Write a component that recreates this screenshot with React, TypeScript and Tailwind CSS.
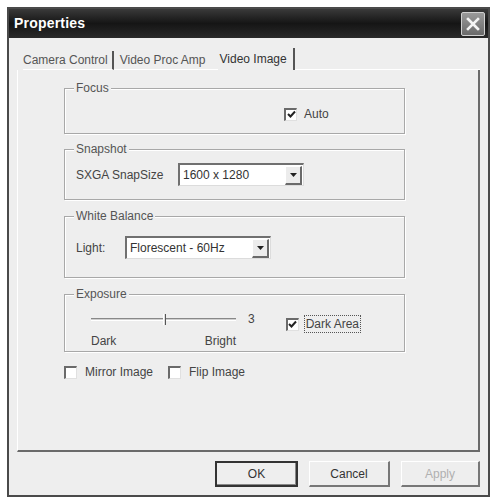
import React from "react";

const font = { fontFamily: '"Liberation Sans", Arial, sans-serif' };

function Check({ checked }: { checked?: boolean }) {
  return (
    <div className="w-[13px] h-[13px] bg-white border-t-2 border-l-2 border-b border-r border-t-[#6a6a6a] border-l-[#6a6a6a] border-b-[#e0e0e0] border-r-[#e0e0e0] flex items-center justify-center shrink-0">
      {checked && (
        <svg width="9" height="9" viewBox="0 0 9 9">
          <path d="M1 4 L3.5 6.5 L8 1.5" stroke="#222" strokeWidth="2" fill="none" />
        </svg>
      )}
    </div>
  );
}

function Combo({ value, w }: { value: string; w: string }) {
  return (
    <div className={`${w} h-[23px] bg-white border-t-2 border-l-2 border-b border-r border-t-[#707070] border-l-[#707070] border-b-[#dcdcdc] border-r-[#dcdcdc] flex items-center`}>
      <span className="flex-1 pl-[3px] text-[12px] text-[#333] leading-none">{value}</span>
      <div className="w-[17px] h-[19px] bg-[#ececec] border-t border-l border-b-2 border-r-2 border-t-white border-l-white border-b-[#6a6a6a] border-r-[#6a6a6a] flex items-center justify-center mr-[1px]">
        <svg width="7" height="4" viewBox="0 0 7 4">
          <path d="M0 0 H7 L3.5 4 Z" fill="#222" />
        </svg>
      </div>
    </div>
  );
}

function Group({ title, h, children }: { title: string; h: string; children?: React.ReactNode }) {
  return (
    <div className={`w-[341px] ${h} border border-[#a8a8a8] shadow-[1px_1px_0_#ffffff,inset_1px_1px_0_#ffffff] flex flex-col`}>
      <span className="-mt-[8px] ml-[9px] px-[2px] bg-[#eeeeee] w-fit text-[12px] leading-[14px] text-[#555]">{title}</span>
      {children}
    </div>
  );
}

function Button({ label, w, strong, disabled }: { label: string; w: string; strong?: boolean; disabled?: boolean }) {
  return (
    <div
      className={`${w} h-[26px] flex items-center justify-center text-[12px] ${disabled ? "text-[#b0b0b0]" : "text-[#333]"} ${
        strong ? "border-2 border-[#333] shadow-[inset_-1px_-1px_0_#888]" : "border-t border-l border-b-2 border-r-2 border-t-white border-l-white border-b-[#777] border-r-[#777]"
      } bg-[#eeeeee]`}
    >
      {label}
    </div>
  );
}

export default function App() {
  return (
    <div className="w-[493px] h-[501px] bg-white pt-[7px] pl-[7px]" style={font}>
      <div className="w-[483px] h-[490px] border-2 border-[#4a4a4a] bg-[#eeeeee] flex flex-col">
        {/* Title bar */}
        <div className="h-[29px] bg-gradient-to-b from-[#3a3a3a] via-[#151515] to-[#2a2a2a] flex items-center justify-between pl-[5px] pr-[3px]">
          <span className="text-white font-bold text-[14px] tracking-[0.2px]">Properties</span>
          <div className="w-[24px] h-[24px] border border-[#d0d0d0] rounded-[2px] bg-gradient-to-b from-[#9a9a9a] to-[#6a6a6a] flex items-center justify-center">
            <svg width="14" height="14" viewBox="0 0 14 14">
              <path d="M2 2 L12 12 M12 2 L2 12" stroke="#f4f4f4" strokeWidth="2.6" strokeLinecap="square" />
            </svg>
          </div>
        </div>

        {/* Tabs */}
        <div className="flex items-end h-[32px] pl-[14px] pr-[8px] text-[12px] text-[#555]">
          <div className="h-[19px] flex items-center pr-[4px] border-r-2 border-[#555] border-b border-b-white">Camera Control</div>
          <div className="h-[19px] flex items-center pl-[6px] pr-[12px] border-b border-b-white">Video Proc Amp</div>
          <div className="h-[22px] flex items-center pl-[2px] pr-[6px] border-r-2 border-r-[#555] text-[#333]">Video Image</div>
          <div className="flex-1 h-px bg-white" />
        </div>

        {/* Panel */}
        <div className="ml-[8px] w-[463px] h-[382px] border-r-2 border-b-2 border-r-[#6a6a6a] border-b-[#6a6a6a] border-l border-l-white flex flex-col pl-[46px] pt-[18px] text-[12px] text-[#444]">
          <Group title="Focus" h="h-[46px]">
            <div className="flex items-center ml-[219px] mt-[10px] gap-[7px]">
              <Check checked />
              <span>Auto</span>
            </div>
          </Group>
          <div className="h-[15px]" />
          <Group title="Snapshot" h="h-[51px]">
            <div className="flex items-center ml-[11px] mt-[7px]">
              <span className="w-[102px]">SXGA SnapSize</span>
              <Combo value="1600 x 1280" w="w-[126px]" />
            </div>
          </Group>
          <div className="h-[16px]" />
          <Group title="White Balance" h="h-[62px]">
            <div className="flex items-center ml-[11px] mt-[13px]">
              <span className="w-[49px]">Light:</span>
              <Combo value="Florescent - 60Hz" w="w-[146px]" />
            </div>
          </Group>
          <div className="h-[16px]" />
          <Group title="Exposure" h="h-[58px]">
            <div className="flex ml-[26px] mt-[11px]">
              <div className="flex flex-col w-[145px]">
                <div className="relative h-[14px] flex items-center">
                  <div className="w-full h-[3px] border-t border-b border-t-[#888] border-b-white bg-[#cfcfcf]" />
                  <div className="absolute left-[72px] top-[2px] w-[3px] h-[11px] border-l border-r border-l-white border-r-[#555] bg-[#ddd]" />
                </div>
                <div className="flex justify-between mt-[9px] leading-none">
                  <span>Dark</span>
                  <span>Bright</span>
                </div>
              </div>
              <span className="ml-[12px] leading-[14px]">3</span>
              <div className="flex items-center ml-[31px] mt-[3px] h-[18px] gap-[5px]">
                <Check checked />
                <span className="px-[1px] border border-dotted border-[#555] leading-[16px]">Dark Area</span>
              </div>
            </div>
          </Group>
          <div className="flex items-center mt-[11px]">
            <Check />
            <span className="ml-[8px]">Mirror Image</span>
            <div className="ml-[15px]"><Check /></div>
            <span className="ml-[8px]">Flip Image</span>
          </div>
        </div>

        {/* Buttons */}
        <div className="flex justify-end gap-[11px] pr-[8px] mt-[9px]">
          <Button label="OK" w="w-[83px]" strong />
          <Button label="Cancel" w="w-[81px]" />
          <Button label="Apply" w="w-[79px]" disabled />
        </div>
      </div>
    </div>
  );
}
